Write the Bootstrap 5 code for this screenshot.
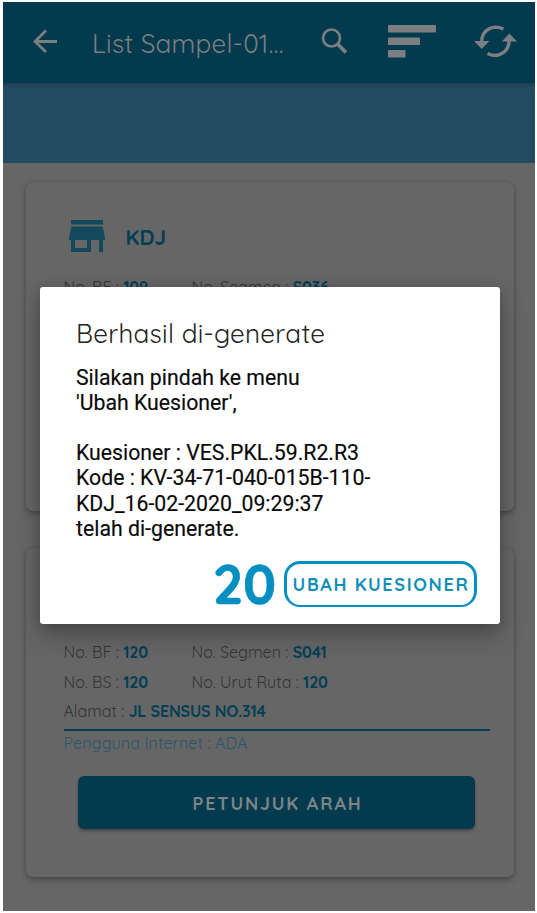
<!DOCTYPE html>
<html lang="id">
<head>
<meta charset="utf-8">
<meta name="viewport" content="width=device-width, initial-scale=1">
<title>List Sampel</title>
<link href="https://cdn.jsdelivr.net/npm/bootstrap@5.3.0/dist/css/bootstrap.min.css" rel="stylesheet">
<style>
body{background:#fff;font-family:Quicksand,Lato,sans-serif;overflow:hidden}
.screen{width:532px;height:909px;margin:2px 0 0 3px;background:#666;overflow:hidden}
.appbar{height:81px;background:#033a4e;color:#7b7f81;padding:0 18px 3px 29px;box-shadow:0 1px 3px 1px rgba(30,50,65,.6);z-index:1}
.apptitle{font-size:26px;font-weight:400;width:258px;padding-left:34px;padding-top:5px;letter-spacing:.25px;white-space:nowrap}
.sorticon{margin-left:38px}
.band{height:80px;background:#244c60}
.sample{width:487.5px;height:329px;margin:19px 0 37px 23px;border-radius:7px;background:#666;box-shadow:0 3px 6px rgba(0,0,0,.27),0 0 2px rgba(0,0,0,.18);padding:0 24px 0 37.5px;font-size:16px;color:#343434}
.sample b{color:#023f55;font-weight:700}
.infoline b{letter-spacing:-.15px}
.samplehead{padding:37px 0 19px 5px}
.covered{height:90px}
.infoline{height:29.5px;line-height:29.5px;white-space:nowrap}
.infoline .first{width:128px}
.fs-name{font-size:21px;padding-left:21px;padding-top:3px;letter-spacing:.3px}
.internet{border-top:2px solid #033f55;color:#2a566c;line-height:25px;height:47px;margin-top:2px;letter-spacing:.12px}
.direction{height:53px;margin:0 15px 0 14px;background:#033a4e;color:#7f8587;border-radius:6px;font-size:18px;font-weight:700;letter-spacing:1.85px;box-shadow:0 2px 3px rgba(0,0,0,.3);padding:3px 0 0 3px}
.dialogbox{left:40px;top:287px;width:459.5px;height:337px;background:#fff;border-radius:3px;padding:31px 23px 17px 36px;box-shadow:0 12px 24px rgba(0,0,0,.26),0 2px 12px rgba(0,0,0,.16);z-index:5}
.dialogtitle{font-size:26px;line-height:32px;font-weight:400;color:#222;letter-spacing:.3px;white-space:nowrap;margin-bottom:14.5px}
.message{font-family:Roboto,sans-serif;font-size:21.25px;line-height:25.2px;color:#080808;-webkit-text-stroke:.15px #080808;white-space:nowrap}
.step{font-size:54px;line-height:46px;font-weight:700;color:#048fc2;-webkit-text-stroke:.6px #048fc2;letter-spacing:-.6px}
.change{width:193px;height:46px;border:2.6px solid #048fc2;border-width:3px 3px 2px;border-radius:16px;color:#128fb5;font-size:18px;font-weight:700;letter-spacing:1.65px;padding-left:2px;white-space:nowrap}
</style>
<script src="https://cdn.jsdelivr.net/npm/bootstrap@5.3.0/dist/js/bootstrap.bundle.min.js"></script>
</head>
<body>
<main class="screen">
  <header class="appbar d-flex align-items-center position-relative">
    <svg class="flex-shrink-0" width="26" height="26" viewBox="0 0 26 26" fill="none" stroke="currentColor" stroke-width="2.8"><path d="M14 2.500 3 13.500l11 10.500M3 13.500h22"/></svg>
    <div class="apptitle flex-shrink-0">List Sampel-01...</div>
    <svg class="ms-1 flex-shrink-0" width="30" height="30" viewBox="0 0 30 30" fill="none" stroke="currentColor"><circle cx="11.500" cy="12" r="8.500" stroke-width="2.600"/><path d="M17.500 18l8.500 8.500" stroke-width="3.800"/></svg>
    <svg class="flex-shrink-0 sorticon" width="48" height="34" viewBox="0 0 48 34" fill="currentColor"><rect width="48" height="7.500" y="1" rx="1"/><rect y="13.500" width="32" height="7.500" rx="1"/><rect y="26" width="17.500" height="7.500" rx="1"/></svg>
    <svg class="flex-shrink-0 ms-auto" width="43" height="34" viewBox="0 0 43 34" fill="none" stroke="currentColor" stroke-width="3.400"><path d="M29.500 5C20 .300 8 5 7.700 17.500M13.500 29.500C23 34.500 35 29 35.300 16"/><path d="M0 17h15.500L7.700 25zM27.800 17.500h15.200L35.300 9.500z" fill="currentColor" stroke="none"/></svg>
  </header>
  <div class="band"></div>

  <section class="sample">
    <div class="d-flex align-items-center samplehead">
      <svg width="36" height="34" viewBox="0 0 36 34" fill="#14485c"><path d="M2 1h32v4.500H2zM2.500 7.500h31L36 18.500v2.500h-2v12h-4V21h-8v12H2V21H0v-2.500zM6 21v8h12v-8z" fill-rule="evenodd"/></svg>
      <b class="fs-name">KDJ</b>
    </div>
    <div class="infoline d-flex"><span class="first">No. BF : <b>109</b></span><span>No. Segmen : <b>S036</b></span></div>
  </section>

  <section class="sample">
    <div class="covered"></div>
    <div class="infoline d-flex"><span class="first">No. BF : <b>120</b></span><span>No. Segmen : <b>S041</b></span></div>
    <div class="infoline d-flex"><span class="first">No. BS : <b>120</b></span><span>No. Urut Ruta : <b>120</b></span></div>
    <div class="infoline">Alamat : <b>JL SENSUS NO.314</b></div>
    <div class="internet">Pengguna Internet : ADA</div>
    <div class="direction d-flex align-items-center justify-content-center">PETUNJUK ARAH</div>
  </section>
</main>

<div class="dialogbox position-absolute d-flex flex-column" role="dialog">
  <div class="dialogtitle">Berhasil di-generate</div>
  <div class="message">Silakan pindah ke menu<br>'Ubah Kuesioner',<br><br>Kuesioner : VES.PKL.59.R2.R3<br>Kode : KV-34-71-040-015B-110-<br>KDJ_16-02-2020_09:29:37<br>telah di-generate.</div>
  <div class="d-flex justify-content-end align-items-center mt-auto gap-2">
    <span class="step">20</span>
    <div class="change d-flex align-items-center justify-content-center">UBAH KUESIONER</div>
  </div>
</div>
</body>
</html>
